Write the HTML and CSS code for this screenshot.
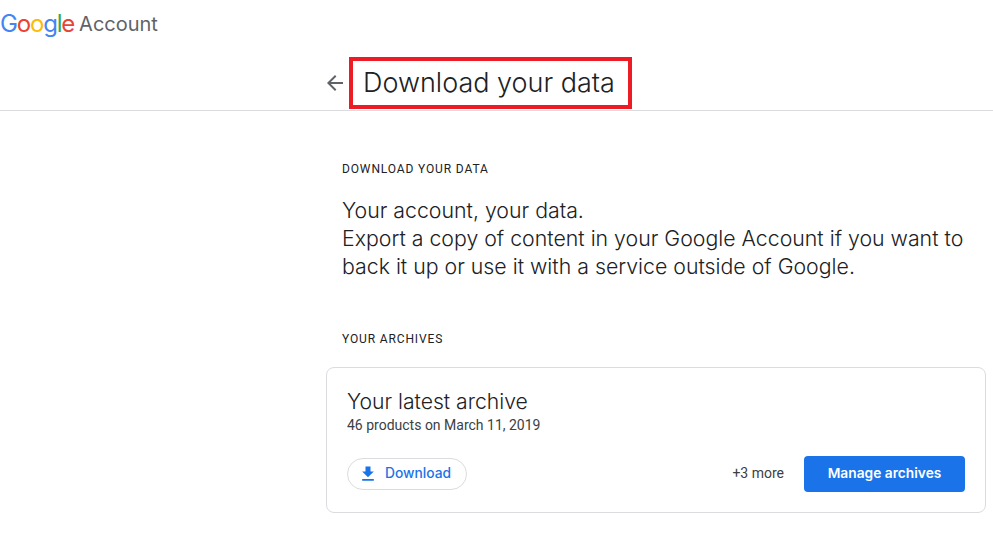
FILE: index.html
```html
<!DOCTYPE html>
<html lang="en">
<head>
    <meta charset="UTF-8">
    <title>Download your data</title>
    <link rel="stylesheet" href="styles.css">
</head>
<body>

<header class="header">
    <div class="brand">
        <span class="logo"><span class="blue">G</span><span class="red">o</span><span class="yellow">o</span><span class="blue">g</span><span class="green">l</span><span class="red">e</span></span>
        <span class="brand-name">Account</span>
    </div>
    <div class="title-row">
        <svg class="back" width="24" height="24" viewBox="0 0 24 24"><path d="M20 11H7.83l5.59-5.59L12 4l-8 8 8 8 1.41-1.41L7.83 13H20v-2z"/></svg>
        <h1 class="title">Download your data</h1>
    </div>
</header>

<main class="content">
    <h2 class="section-label first">DOWNLOAD YOUR DATA</h2>
    <p class="intro">Your account, your data.<br>Export a copy of content in your Google Account if you want to<br>back it up or use it with a service outside of Google.</p>

    <h2 class="section-label second">YOUR ARCHIVES</h2>
    <div class="card">
        <div class="card-title">Your latest archive</div>
        <div class="card-sub">46 products on March 11, 2019</div>
        <div class="card-actions">
            <button class="btn-download">
                <svg width="20" height="20" viewBox="0 0 24 24"><path d="M19 9h-4V3H9v6H5l7 7 7-7zM5 18v2h14v-2H5z"/></svg>
                Download
            </button>
            <div class="actions-right">
                <span class="more">+3 more</span>
                <button class="btn-manage">Manage archives</button>
            </div>
        </div>
    </div>
</main>

</body>
</html>
```

FILE: styles.css
```css
body {
    margin: 0;
    background: #ffffff;
    color: #202124;
    font-family: Roboto, Arial, sans-serif;
}
.header {
    height: 110px;
    border-bottom: 1px solid #dadce0;
}
.brand {
    display: flex;
    align-items: center;
    gap: 5px;
    height: 47px;
    font-family: Inter, Arial, sans-serif;
    font-size: 20px;
}
.logo {
    font-size: 24px;
    letter-spacing: -1.2px;
}
.blue { color: #4285f4; }
.red { color: #ea4335; }
.yellow { color: #fbbc05; }
.green { color: #34a853; }
.brand-name {
    color: #5f6368;
}
.title-row {
    display: flex;
    align-items: center;
    height: 52px;
    margin-top: 10px;
    padding-left: 323px;
}
.back {
    fill: #5f6368;
    margin-right: 2px;
}
.title {
    margin: 0;
    padding: 0 13px 0 10px;
    height: 44px;
    line-height: 43px;
    border: 4px solid #ed1c24;
    font-family: Inter, Arial, sans-serif;
    font-size: 27px;
    font-weight: 350;
    white-space: nowrap;
}
.content {
    padding-left: 326px;
    width: 660px;
}
.section-label {
    margin: 0 0 0 16px;
    font-size: 12px;
    line-height: 16px;
    font-weight: 400;
    letter-spacing: 0.87px;
    color: #202124;
}
.section-label.first {
    padding-top: 50px;
}
.section-label.second {
    margin-top: 51px;
}
.intro {
    margin: 19px 0 0 16px;
    font-family: Inter, Arial, sans-serif;
    font-size: 21.3px;
    font-weight: 350;
    line-height: 28px;
    white-space: nowrap;
}
.card {
    margin-top: 20px;
    height: 144px;
    padding: 0 20px;
    border: 1px solid #dadce0;
    border-radius: 8px;
    display: flex;
    flex-direction: column;
}
.card-title {
    margin-top: 20px;
    font-family: Inter, Arial, sans-serif;
    font-size: 21.15px;
    font-weight: 350;
    line-height: 28px;
}
.card-sub {
    font-size: 14px;
    line-height: 18px;
    color: #3c4043;
}
.card-actions {
    display: flex;
    align-items: center;
    justify-content: space-between;
    margin-top: 22px;
}
.btn-download {
    display: flex;
    align-items: center;
    gap: 7px;
    width: 120px;
    height: 32px;
    padding: 0 0 2px 10px;
    background: #ffffff;
    border: 1px solid #dadce0;
    border-radius: 16px;
    color: #1a73e8;
    font-family: Inter, Arial, sans-serif;
    font-size: 13.8px;
    font-weight: 500;
    cursor: pointer;
}
.btn-download svg {
    fill: #1a73e8;
    margin-top: 2px;
}
.actions-right {
    display: flex;
    align-items: center;
    gap: 20px;
}
.more {
    margin-bottom: 2px;
    font-size: 14px;
    color: #3c4043;
}
.btn-manage {
    width: 161px;
    height: 36px;
    padding: 0 0 2px;
    background: #1a73e8;
    color: #ffffff;
    border: none;
    border-radius: 4px;
    font-family: Inter, Arial, sans-serif;
    font-size: 13.75px;
    font-weight: 600;
    cursor: pointer;
}
```
